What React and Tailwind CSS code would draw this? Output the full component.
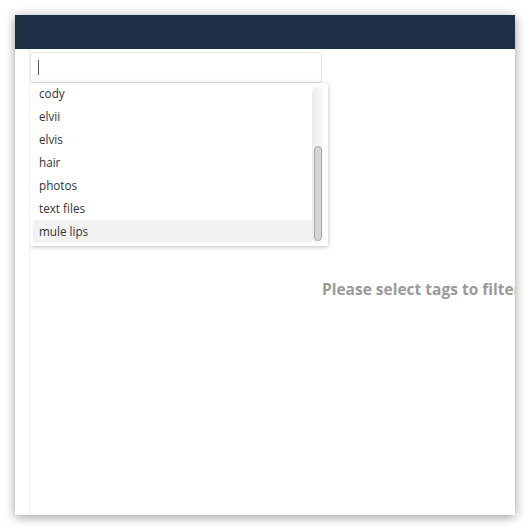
const tags = ["cody", "elvii", "elvis", "hair", "photos", "text files", "mule lips"];

const App = () => {
    return (
        <div className="w-[530px] h-[530px] bg-white p-[15px]" style={{ fontFamily: '"Open Sans", sans-serif' }}>
            {/* window */}
            <div className="w-[500px] h-[500px] bg-white flex flex-col overflow-hidden shadow-[0_2px_10px_rgba(0,0,0,0.4)]">
                <div className="h-[34px] shrink-0 bg-[#1f2d45]" />
                <div className="flex flex-1 min-h-0">
                    <div className="w-[15px] shrink-0 border-r border-[#f2f2f2]" />
                    <main className="relative flex-1 min-w-0 overflow-hidden">
                        {/* tag input */}
                        <div className="mt-[3px] w-[292px] h-[31px] border border-[#e4e4e4] rounded-[3px] flex items-center pl-[7px]">
                            <div className="w-px h-[15px] bg-[#555]" />
                        </div>

                        {/* dropdown */}
                        <div className="absolute left-0 top-[34px] w-[298px] h-[163px] bg-white rounded-[3px] shadow-[0_1px_5px_rgba(0,0,0,0.25)] overflow-hidden">
                            <div className="pl-[3px] pr-[16px] -mt-px text-[11.7px] text-[#333]">
                                {tags.map((t, i) => (
                                    <div
                                        key={t}
                                        className={`h-[23px] flex items-center pl-[6px] ${i === tags.length - 1 ? "bg-[#f2f2f2]" : ""}`}
                                    >
                                        {t}
                                    </div>
                                ))}
                            </div>
                            {/* scrollbar */}
                            <div className="absolute right-[5px] top-[4px] w-[11px] h-[156px] rounded-[6px] bg-gradient-to-r from-[#ececec] to-[#f7f7f7]">
                                <div className="absolute left-[2px] top-[59px] w-[8px] h-[95px] rounded-[4px] bg-[#d4d4d4] border border-[#a9a9a9]" />
                            </div>
                        </div>

                        {/* empty state */}
                        <div className="pt-[195px] pl-[292px] whitespace-nowrap text-[15.5px] font-bold text-[#9a9a9a]">
                            Please select tags to filter
                        </div>
                    </main>
                </div>
            </div>
        </div>
    );
};

export default App;
